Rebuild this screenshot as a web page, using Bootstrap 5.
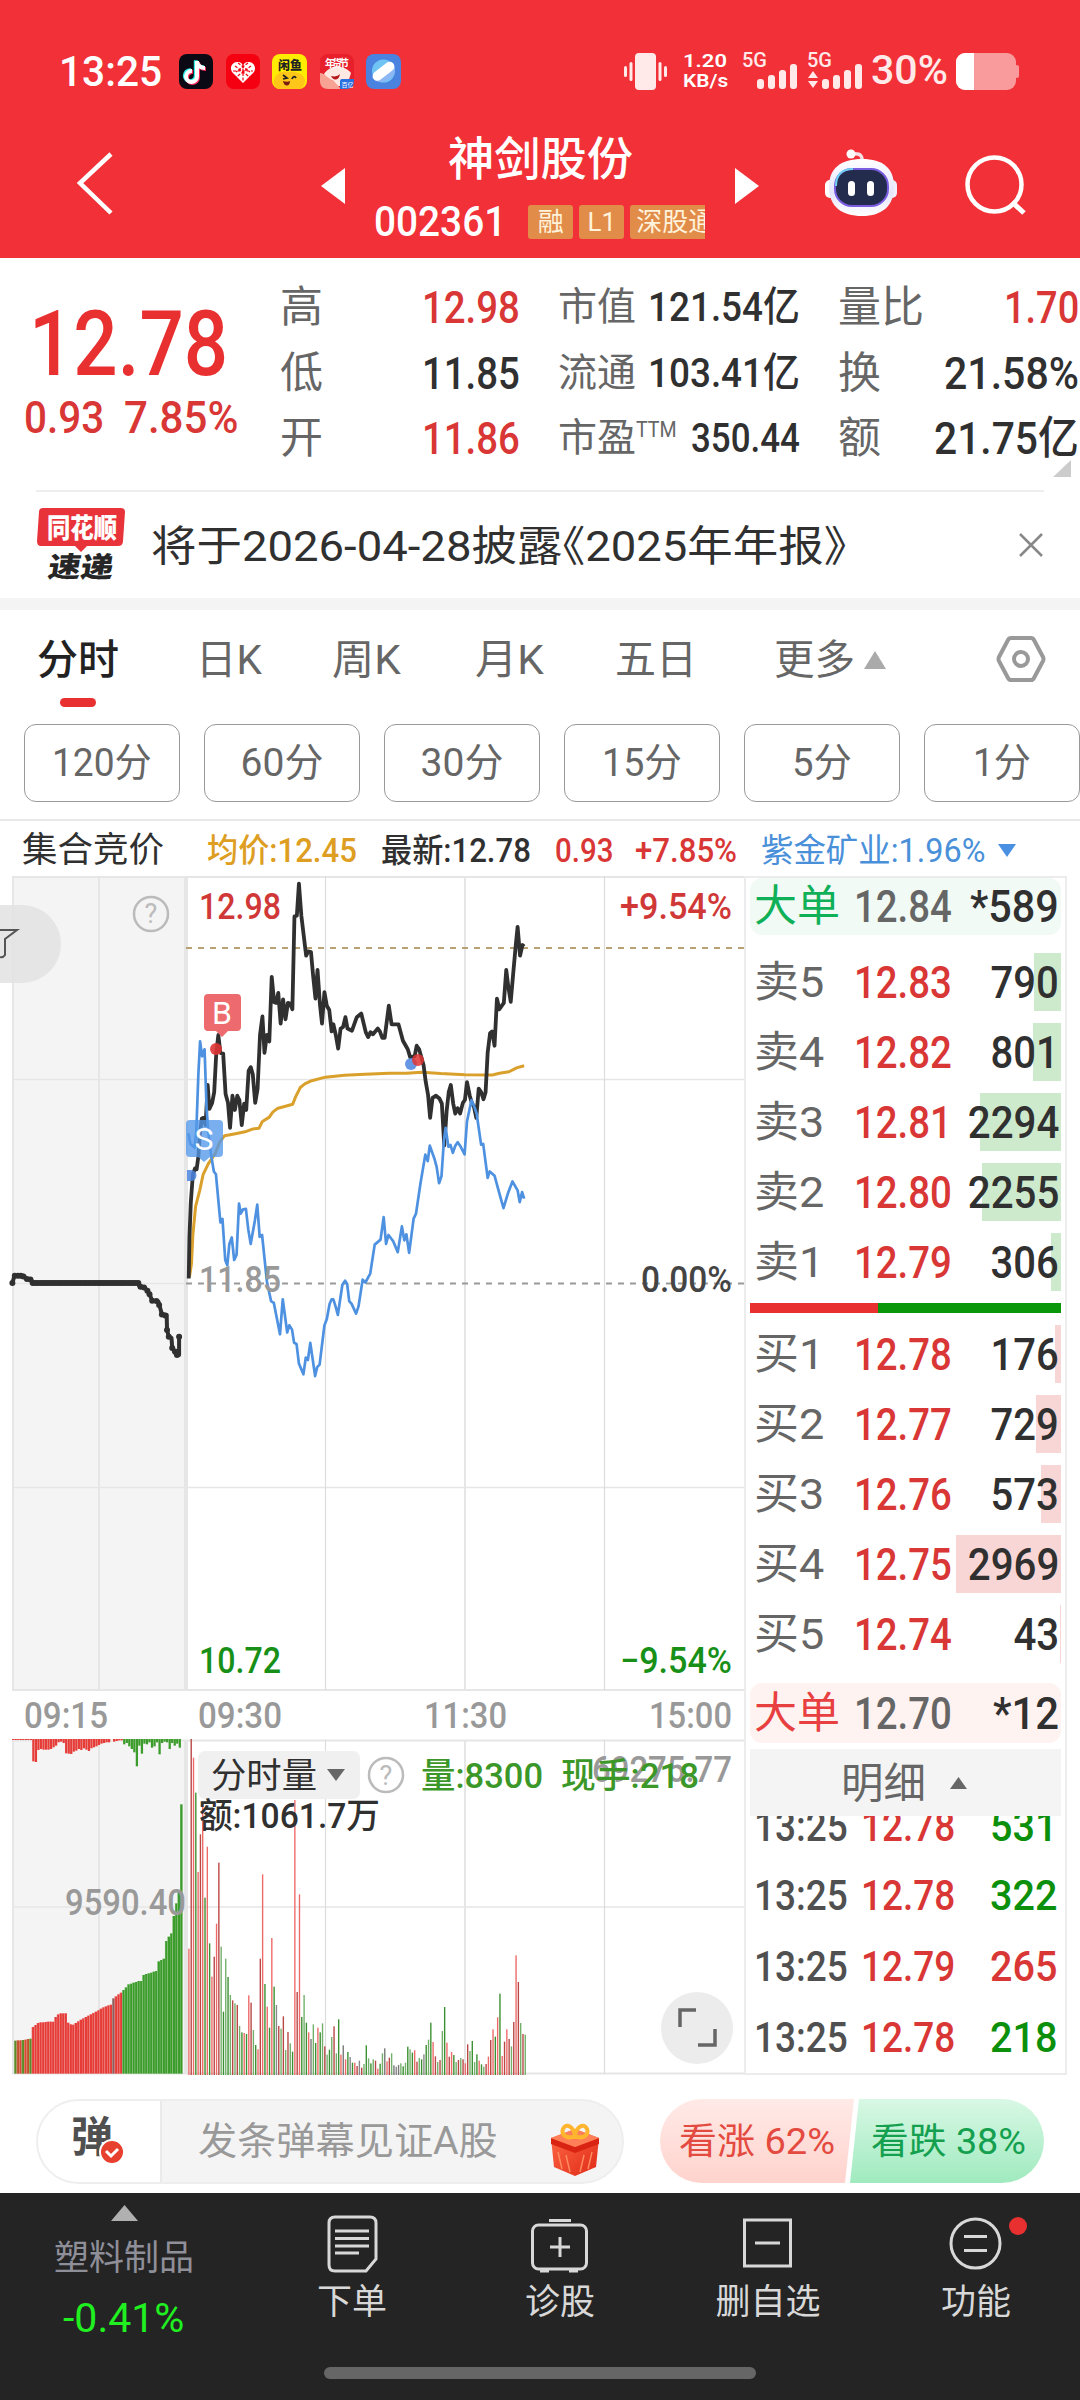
<!DOCTYPE html>
<html lang="zh-CN">
<head>
<meta charset="utf-8">
<meta name="viewport" content="width=device-width, initial-scale=1">
<title>神剑股份 002361</title>
<link href="https://cdn.jsdelivr.net/npm/bootstrap@5.3.0/dist/css/bootstrap.min.css" rel="stylesheet">
<style>
:root{--up:#d93636;--down:#0c900c;--ink:#303030;--dim:#666}
html,body{margin:0;overflow:hidden}
body{width:1080px;height:2400px;font-family:Roboto,"Noto Sans CJK SC",sans-serif;line-height:1;color:var(--ink);background:#fff}
svg{display:block;flex:none;overflow:visible}
svg text{font-family:Roboto,"Noto Sans CJK SC",sans-serif}
.fit{display:inline-block;white-space:nowrap;transform-origin:0 50%;flex:none;justify-self:start}
.halt{font-feature-settings:"halt"}
.m5{font-weight:500}
.c-up{color:var(--up)}.c-down{color:var(--down)}.c-dim{color:var(--dim)}
.topbar{height:258px;background:#f13037;color:#fff}
.status{height:97px;padding:45px 61px 0 59px}
.apps{gap:12.5px;margin-left:17px}
.net{font-size:19px;font-weight:600;line-height:20px}
.titlebar{height:161px}
.ttl{width:389px;padding:36px 0 0 28px}
.ttl-name{font-size:46px;line-height:52px;margin-left:-28px}
.codeline{height:36px;margin-top:19px;gap:6px;width:331px;overflow:hidden}
.code{font-size:42px;margin-right:14px}
.tagx{background:#e28c4a;color:#fff3dc;font-size:26px;height:34px;line-height:34px;border-radius:3px;text-align:center;flex:none}
.quote{height:232px;padding-top:17px}
.pricebox{width:262px;padding-top:23px}
.px{font-size:91px;line-height:92px;color:#e93030;font-weight:500;margin-left:-4px}
.chg{font-size:45px;line-height:45px;margin-top:5px;gap:20px}
.stat{width:240px;margin-left:18px}
.stat+.stat{margin-left:38px;width:242px}
.srow{height:65.5px}
.k43{font-size:43px}.k38{font-size:39px}
.v45{font-size:45px}.v41{font-size:41px}
.news{height:108px;margin:0 36px;border-top:2px solid #eee}
.band{height:12px;background:#f4f4f4}
.tabsx{height:114px;font-size:41px}
.tab-grid{display:grid;grid-template-columns:159px 136px 143px 140px 159px 89px 133px 84px;padding-left:37px;height:100px}
.tab-line{width:36px;height:9px;border-radius:5px;background:#e93030;margin:-1px 0 0 60px}
.periods{gap:24px;padding-left:24px;overflow:hidden}
.pbtn{width:156px;height:78px;border:1.5px solid #999;border-radius:12px;background:#fff;color:var(--dim);font-size:39px;line-height:1;flex:none}
.info{border-top:2px solid #e8e8e8;margin-top:17px;height:57px;display:grid;grid-template-columns:185px 174px 174px 80px 126px 237px 40px;padding:4px 0 0 22px;font-size:33px}
.book{width:323px;height:1199px;border:2px solid #ececec;padding:0 4px;overflow:hidden}
.brow{height:58px;margin-bottom:12px;display:grid;grid-template-columns:100px 98px 1fr;padding:0 2px 0 4px;background-repeat:no-repeat;background-position:right center}
.brow .q,.trow .q{justify-self:end;transform-origin:100% 50%}
.big{border-radius:12px;height:57px}
.det{height:67px;background:#f4f4f4;font-size:42px}
.trow{display:grid;grid-template-columns:107px 100px 1fr;height:71px;padding:0 4px 0 4px;font-size:42.5px;font-weight:500}
.foot{height:94px;margin-top:24px;padding:0 36px 10px}
.danmu{width:588px;height:85px;border:2px solid #eee;border-radius:43px;background:#f4f4f4;overflow:hidden}
.dm-l{width:124px;height:100%;background:#fff;border-right:2px solid #eaeaea}
.dm-t{font-size:38px;color:#999;margin-left:36px}
.nav-dark{height:207px;background:#242424;color:#d8d8d8}
.nitem{width:208px;font-size:35px}
.nitem span{margin-top:2px}
.home{width:432px;height:12px;border-radius:6px;background:#666;margin:0 auto}
</style>
<script src="https://cdn.jsdelivr.net/npm/bootstrap@5.3.0/dist/js/bootstrap.bundle.min.js"></script>
</head>
<body>
<header class="topbar">
  <div class="status d-flex align-items-center">
    <span class="fit m5" data-w="103" style="font-size:43px">13:25</span>
    <div class="apps d-flex">
      <svg width="34" height="35" viewBox="0 0 34 35"><rect width="34" height="35" rx="8" fill="#0b0a14"/><g fill="none" stroke-width="4"><path d="M18 7v15a5.500 5.500 0 1 1-5-5M18 8c1 4 4 6 8 6" stroke="#2ff0ea" transform="translate(-1.200 -.8)"/><path d="M18 7v15a5.500 5.500 0 1 1-5-5M18 8c1 4 4 6 8 6" stroke="#fe2858" transform="translate(1 1)"/><path d="M18 7v15a5.500 5.500 0 1 1-5-5M18 8c1 4 4 6 8 6" stroke="#fff"/></g></svg>
      <svg width="34" height="35" viewBox="0 0 34 35"><rect width="34" height="35" rx="8" fill="#f40010"/><path d="M17 29 6 18c-3-5 1-11 6-10 3 0 4 2 5 3 1-1 2-3 5-3 5-1 9 5 6 10z" fill="#fff"/><path d="M9 12l16 12M25 12 9 24M17 10v18M7 17h20M12 9l12 9M22 9l-12 9" stroke="#f40010" stroke-width="1.200" stroke-dasharray="3 1.500"/></svg>
      <svg width="35" height="35" viewBox="0 0 35 35"><rect width="35" height="35" rx="8" fill="#ffec00"/><path d="M2 29C1 21 10 16 16 18c7-1 15 1 17 8 0 6-3 9-8 9H9c-4 0-7-2-7-6z" fill="#ffc61a"/><text x="6" y="15.500" font-size="12" font-weight="900" fill="#222" textLength="24">闲鱼</text><path d="M11 21l4 3-4 1M20 25c1-3 3-3 4-1" stroke="#222" stroke-width="1.800" fill="none"/><path d="M11 27c3 1 5 1 7 0 0 6-6 6-7 0z" fill="#7a1c10"/></svg>
      <svg width="34" height="35" viewBox="0 0 34 35"><rect width="34" height="35" rx="8" fill="#e8202c"/><path d="M4 20c3-4 8-8 14-7 5 0 10 2 13 6l-4 13H10z" fill="#ffe9e2"/><path d="M0 19c5 0 8 6 13 7l8 9H8c-5 0-8-3-8-8z" fill="#f8a294"/><text x="5" y="12.500" font-size="10" font-weight="700" fill="#fff" textLength="24">年货节</text><path d="M11 22c4 1 7 0 9-2-1 7-7 7-9 2z" fill="#b3171d"/><path d="M20 27q0-2 2-2h12v2q0 8-8 8h-6z" fill="#2a6fe0"/><text x="21.500" y="33" font-size="6" fill="#fff">百亿</text></svg>
      <svg width="35" height="35" viewBox="0 0 35 35"><rect width="35" height="35" rx="8" fill="#4a82e0"/><circle cx="17.500" cy="17" r="11.500" fill="#6fc4f4"/><path d="M6 23c3 7 15 6 20 0 4-5 3-9 1-13z" fill="#8db6f5"/><rect x="5" y="12.500" width="25" height="9.500" rx="4.700" fill="#fff" transform="rotate(-38 17.500 17.200)"/></svg>
    </div>
    <svg class="ms-auto" width="43" height="37" viewBox="0 0 43 37" fill="#ffe9e9"><rect x="11" y="0" width="21" height="37" rx="4"/><rect x="5.500" y="9" width="3" height="19" rx="1.500"/><rect x="34.500" y="9" width="3" height="19" rx="1.500"/><rect x="0" y="13" width="3" height="11" rx="1.500"/><rect x="40" y="13" width="3" height="11" rx="1.500"/></svg>
    <div class="net text-center" style="width:46px;margin-left:15px"><span class="fit" data-w="44">1.20</span><br><span class="fit" data-w="45">KB/s</span></div>
    <svg width="122" height="38" viewBox="741 53 122 38" style="margin-left:13px" fill="#ffe9e9"><text x="742" y="68" font-size="19.500" font-weight="500" textLength="25" lengthAdjust="spacingAndGlyphs">5G</text><text x="807" y="68" font-size="19.500" font-weight="500" textLength="25" lengthAdjust="spacingAndGlyphs">5G</text><rect x="757" y="80" width="7" height="10" rx="3"/><rect x="768" y="76" width="7" height="14" rx="3"/><rect x="779" y="71" width="7" height="19" rx="3"/><rect x="790" y="65" width="7" height="25" rx="3"/><rect x="822" y="80" width="7" height="10" rx="3"/><rect x="833" y="76" width="7" height="14" rx="3"/><rect x="844" y="71" width="7" height="19" rx="3"/><rect x="855" y="65" width="7" height="25" rx="3"/><path d="M808 79l5-7 5 7zM808 82l5 7 5-7z"/></svg>
    <span class="fit m5" data-w="77" style="font-size:40px;margin-left:8px;color:#ffe9e9">30%</span>
    <svg width="63" height="37" viewBox="0 0 63 37" style="margin:0 0 0 8px"><rect width="60" height="37" rx="9" fill="#f99a9d"/><path d="M9 0h9v37H9a9 9 0 0 1-9-9V9a9 9 0 0 1 9-9z" fill="#fff"/><rect x="59" y="12" width="4" height="13" rx="2" fill="#f99a9d"/></svg>
  </div>
  <div class="titlebar d-flex align-items-start">
    <svg width="320" height="160" viewBox="0 97 320 160"><path d="M111 154 80 183l31 30" fill="none" stroke="#fff" stroke-width="4.500"/></svg>
    <svg width="26" height="160" viewBox="320 97 26 160"><path d="M345 168v36l-24-18z" fill="#fff"/></svg>
    <div class="ttl d-flex flex-column align-items-start">
      <div class="ttl-name align-self-center"><span class="fit m5" data-w="185">神剑股份</span></div>
      <div class="codeline d-flex align-items-center"><span class="fit code m5" data-w="132">002361</span><span class="tagx" style="width:45px;margin-left:2px">融</span><span class="tagx" style="width:45px">L1</span><span class="tagx" style="width:90px">深股通</span></div>
    </div>
    <svg width="345" height="160" viewBox="735 97 345 160"><defs><linearGradient id="rb" x1="0" y1="0" x2="0" y2="1"><stop offset="0" stop-color="#fff"/><stop offset=".6" stop-color="#e6e4fb"/><stop offset="1" stop-color="#fff"/></linearGradient></defs><path d="M735 168v36l24-18z" fill="#fff"/><path d="M852 154c9-1 11 2 10 10" stroke="#f7dfe6" stroke-width="3.500" fill="none"/><circle cx="851" cy="154" r="4.500" fill="#fff"/><rect x="825" y="180" width="10" height="18" rx="5" fill="#fff"/><rect x="887" y="180" width="10" height="18" rx="5" fill="#f1efff"/><path d="M829 187c0-19 12-28 33-28s32 9 32 28-12 29-32 29-33-9-33-29z" fill="url(#rb)"/><rect x="835" y="169" width="53" height="37" rx="17" fill="#232c4c" stroke="#7a5ce0" stroke-width="2"/><path d="M836 186c0-12 7-17 17-17" stroke="#6fd0f0" stroke-width="2" fill="none"/><rect x="848" y="181" width="7" height="15" rx="3.500" fill="#fff"/><rect x="867" y="181" width="7" height="15" rx="3.500" fill="#fff"/><circle cx="994.500" cy="184.500" r="27" fill="none" stroke="#fff" stroke-width="4.500"/><path d="M1012 202l12 11" stroke="#fff" stroke-width="5"/></svg>
  </div>
</header>

<section class="quote d-flex">
  <div class="pricebox text-center">
    <div class="px"><span class="fit" data-w="199">12.78</span></div>
    <div class="chg c-up m5 d-flex justify-content-center"><span class="fit" data-w="80">0.93</span><span class="fit" data-w="114">7.85%</span></div>
  </div>
  <div class="stat m5">
    <div class="srow d-flex align-items-center justify-content-between"><span class="k43 c-dim fw-normal">高</span><span class="fit v45 c-up" data-w="98">12.98</span></div>
    <div class="srow d-flex align-items-center justify-content-between"><span class="k43 c-dim fw-normal">低</span><span class="fit v45" data-w="98">11.85</span></div>
    <div class="srow d-flex align-items-center justify-content-between"><span class="k43 c-dim fw-normal">开</span><span class="fit v45 c-up" data-w="98">11.86</span></div>
  </div>
  <div class="stat m5">
    <div class="srow d-flex align-items-center justify-content-between"><span class="k38 c-dim fw-normal">市值</span><span class="fit v41" data-w="152">121.54亿</span></div>
    <div class="srow d-flex align-items-center justify-content-between"><span class="k38 c-dim fw-normal">流通</span><span class="fit v41" data-w="152">103.41亿</span></div>
    <div class="srow d-flex align-items-center justify-content-between"><span class="k38 c-dim fw-normal d-flex">市盈<span class="fit" data-w="41" style="font-size:22px">TTM</span></span><span class="fit v41" data-w="109">350.44</span></div>
  </div>
  <div class="stat m5" style="width:241px">
    <div class="srow d-flex align-items-center justify-content-between"><span class="k43 c-dim fw-normal">量比</span><span class="fit v45 c-up" data-w="75">1.70</span></div>
    <div class="srow d-flex align-items-center justify-content-between"><span class="k43 c-dim fw-normal">换</span><span class="fit v45" data-w="135">21.58%</span></div>
    <div class="srow d-flex align-items-center justify-content-between position-relative"><span class="k43 c-dim fw-normal">额</span><span class="fit v45" data-w="145">21.75亿</span><svg class="position-absolute" style="right:8px;bottom:-5px" width="18" height="17"><path d="M18 0v17H0z" fill="#ccc"/></svg></div>
  </div>
</section>

<section class="news d-flex align-items-center">
  <svg width="93" height="76" viewBox="36 506 93 76"><path d="M43 507h78q4 0 4 4l-2 29q0 5-5 5H87l-6 6-6-6H41q-4 0-4-5l2-29q0-4 4-4z" fill="#e8333a"/><text x="47" y="537" font-size="27" font-weight="900" fill="#fff" textLength="70" lengthAdjust="spacingAndGlyphs">同花顺</text><text transform="translate(47 576) skewX(-9)" font-size="28" font-weight="900" fill="#262626" textLength="65" lengthAdjust="spacingAndGlyphs">速递</text></svg>
  <span class="fit" data-w="696" style="font-size:42px;margin-left:22px;padding-top:3px">将于2026-04-28披露<span class="halt">《</span>2025年年报<span class="halt">》</span></span>
  <svg class="ms-auto" width="26" height="26" viewBox="0 0 26 26"><path d="M2 2l22 22M24 2 2 24" stroke="#888" stroke-width="2.500"/></svg>
</section>
<div class="band"></div>

<nav class="tabsx c-dim">
  <div class="tab-grid align-items-center">
    <span class="m5" style="color:#222">分时</span><span class="fit" data-w="66">日K</span><span class="fit" data-w="69">周K</span><span class="fit" data-w="69">月K</span><span>五日</span><span class="fit" data-w="81">更多</span>
    <svg width="24" height="20"><path d="M12 1l11 18H1z" fill="#aaa"/></svg>
    <svg width="50" height="48" viewBox="0 1 50 48" fill="none" stroke="#999" stroke-width="4"><path d="M15 3h20q2 0 3 2l9 17q1 2 0 4l-9 17q-1 2-3 2H15q-2 0-3-2L3 26q-1-2 0-4l9-17q1-2 3-2z"/><circle cx="25" cy="24" r="7"/></svg>
  </div>
  <div class="overflow-visible" style="height:0"></div>
  <div style="margin-top:-12px"><div class="tab-line"></div></div>
</nav>
<div class="periods d-flex">
  <button class="pbtn btn p-0"><span class="fit" data-w="100">120分</span></button><button class="pbtn btn p-0"><span class="fit" data-w="83">60分</span></button><button class="pbtn btn p-0"><span class="fit" data-w="83">30分</span></button><button class="pbtn btn p-0"><span class="fit" data-w="80">15分</span></button><button class="pbtn btn p-0"><span class="fit" data-w="60">5分</span></button><button class="pbtn btn p-0"><span class="fit" data-w="58">1分</span></button>
</div>

<div class="info align-items-center">
  <span class="fit" data-w="142" style="font-size:35px">集合竞价</span>
  <span class="fit m5" data-w="150" style="color:#dd9e22">均价:12.45</span>
  <span class="fit m5" data-w="150">最新:12.78</span>
  <span class="fit m5 c-up" data-w="58">0.93</span>
  <span class="fit m5 c-up" data-w="102">+7.85%</span>
  <span class="fit" data-w="225" style="color:#4a90d9">紫金矿业:1.96%</span>
  <svg width="18" height="13"><path d="M0 0h18l-9 13z" fill="#4a90e2"/></svg>
</div>

<main class="d-flex" style="height:1199px">
  <svg id="chart" width="744" height="1199" viewBox="0 876 744 1199">
    <rect x="12" y="876" width="174" height="814" fill="#f4f4f4"/><rect x="12" y="1740" width="174" height="334" fill="#f4f4f4"/>
    <g stroke="#e6e6e6" stroke-width="2" fill="none">
      <path d="M12 877H744M12 1690H744M12 1740.500H744M12 2073.500H744M13 876V1690M13 1740V2074M99 876V1690M99 1740V2074M465 876V1690M465 1740V2074"/>
      <path d="M12 1079.500H744M12 1487.500H744M12 1907H744M12 1283.500H186" stroke-width="1.500"/>
      <path d="M325.500 876V1690M325.500 1740V2074M604.500 876V1690M604.500 1740V2074" stroke="#dcdcdc" stroke-width="1.200"/>
      <path d="M186 876V1690M186 1740V2074" stroke-width="4"/>
    </g>
    <path d="M186 948H744" stroke="#b8a273" stroke-width="2" stroke-dasharray="6 6"/>
    <path d="M186 1283.500H744" stroke="#999" stroke-width="2" stroke-dasharray="6 6"/>
    <g id="volume" transform="translate(0,1720) scale(.34439,.33333)"></g>
    <g transform="translate(0,860) scale(.34439,.35714)" fill="none" stroke-linejoin="round">
      <polyline vector-effect="non-scaling-stroke" stroke="#303030" stroke-width="4" points="36,1184 42,1164 68,1164 78,1173 90,1173 95,1184 400,1184 405,1194 420,1196 434,1215 442,1234 460,1236 470,1272 484,1274 485,1315 490,1335 498,1338 500,1366 512,1386 520,1386 520,1335"/>
      <polyline vector-effect="non-scaling-stroke" stroke="#daa02c" stroke-width="3" points="550,1168 556,1130 560,1050 568,970 580,925 590,880 605,850 625,822 638,790 652,772 680,767 715,760 735,753 752,751 762,732 782,720 792,706 805,696 850,684 858,664 872,637 885,627 905,618 945,608 1000,603 1060,600 1130,597 1180,597 1225,594 1280,598 1350,601 1430,602 1450,597 1478,593 1500,582 1522,576"/>
      <polyline vector-effect="non-scaling-stroke" stroke="#303030" stroke-width="3.800" points="548,1172 550,1060 554,960 560,880 566,864 571,866 576,830 580,770 586,724 591,722 597,742 603,630 608,697 616,680 622,650 628,540 634,490 640,540 648,542 655,655 662,680 668,750 675,660 682,700 689,660 695,672 702,742 709,682 715,700 722,590 728,580 734,600 741,680 748,640 755,490 762,438 768,540 775,490 782,508 789,327 796,398 802,400 808,372 815,458 822,390 829,446 836,400 842,402 849,418 855,158 862,156 868,66 875,156 889,268 895,256 903,258 909,322 916,388 922,308 929,404 935,458 942,370 949,408 956,420 963,480 968,460 975,490 982,528 989,472 996,468 1003,440 1009,472 1022,478 1036,440 1049,430 1056,458 1062,482 1069,496 1076,482 1083,488 1097,472 1103,480 1110,498 1117,498 1129,408 1137,460 1157,460 1170,506 1184,530 1191,552 1204,550 1210,520 1217,530 1230,575 1236,620 1243,658 1249,722 1256,666 1266,660 1276,668 1283,682 1290,800 1297,702 1303,650 1309,630 1316,682 1322,710 1329,695 1336,710 1344,680 1350,672 1356,622 1364,660 1370,680 1376,690 1383,722 1390,640 1397,650 1404,670 1410,650 1416,540 1423,485 1429,480 1436,520 1443,388 1450,418 1463,400 1470,308 1476,355 1483,397 1490,320 1497,245 1503,187 1510,268 1517,238 1522,242"/>
      <polyline vector-effect="non-scaling-stroke" stroke="#4d91e0" stroke-width="2.700" points="547,765 553,795 565,805 570,760 576,600 581,508 587,550 594,530 600,700 606,770 612,820 621,872 627,880 640,1015 646,1005 654,1120 660,1135 666,1075 673,1057 680,1120 687,1105 694,962 699,990 706,978 714,977 721,1035 728,1075 740,1010 747,965 754,1055 761,1050 775,1180 787,1235 795,1240 813,1328 821,1230 834,1323 840,1303 848,1315 854,1352 861,1355 868,1410 881,1440 888,1393 894,1400 901,1352 915,1445 921,1420 928,1413 942,1303 949,1285 957,1243 963,1230 968,1230 975,1252 981,1274 994,1190 1002,1178 1008,1187 1014,1235 1021,1243 1034,1270 1041,1250 1053,1175 1061,1183 1075,1158 1088,1077 1105,1063 1114,1000 1121,1075 1128,1050 1142,1068 1155,1098 1167,1026 1174,1065 1180,1048 1188,1100 1201,1004 1208,990 1221,905 1235,825 1242,843 1248,800 1262,838 1268,860 1275,905 1282,885 1289,785 1294,750 1302,803 1308,798 1315,820 1322,800 1329,790 1336,800 1349,824 1356,732 1369,672 1377,690 1384,710 1397,797 1403,795 1416,890 1422,872 1436,884 1449,930 1462,975 1476,930 1488,900 1503,925 1509,958 1516,930 1522,948"/>
    </g>
    <g fill="#303030" id="dots"></g>
    <circle cx="411" cy="1064" r="6" fill="#4a85e0" opacity=".85"/><circle cx="418" cy="1060" r="6" fill="#e03434" opacity=".85"/><circle cx="216" cy="1049" r="6" fill="#e03434" opacity=".9"/><path d="M187 1170h4a5.500 5.500 0 0 1 0 11h-4z" fill="#4a85e0" opacity=".85"/>
    <path d="M208 994h29q4 0 4 4v29q0 4-4 4h-9l-6 6-6-6h-8q-4 0-4-4v-29q0-4 4-4z" fill="#ed6b6e"/>
    <path d="M190 1120h29q4 0 4 4v29q0 4-4 4h-9l-6 5-6-5h-8q-4 0-4-4v-29q0-4 4-4z" fill="#5599ea" opacity=".78"/>
    <g font-size="32" fill="#fff" text-anchor="middle"><text x="222" y="1024">B</text><text x="204" y="1150">S</text></g>
    <g font-weight="500" font-size="36">
      <g fill="#d03838"><text x="199" y="919" textLength="82" lengthAdjust="spacingAndGlyphs">12.98</text><text x="620" y="919" textLength="112" lengthAdjust="spacingAndGlyphs">+9.54%</text></g>
      <g fill="#189018"><text x="199" y="1673" textLength="82" lengthAdjust="spacingAndGlyphs">10.72</text><text x="620" y="1673" textLength="112" lengthAdjust="spacingAndGlyphs">−9.54%</text></g>
      <text x="199" y="1292" fill="#999" textLength="82" lengthAdjust="spacingAndGlyphs">11.85</text><text x="641" y="1292" fill="#444" textLength="91" lengthAdjust="spacingAndGlyphs">0.00%</text>
      <g fill="#999"><text x="24" y="1728" textLength="84" lengthAdjust="spacingAndGlyphs">09:15</text><text x="198" y="1728" textLength="84" lengthAdjust="spacingAndGlyphs">09:30</text><text x="424" y="1728" textLength="83" lengthAdjust="spacingAndGlyphs">11:30</text><text x="649" y="1728" textLength="83" lengthAdjust="spacingAndGlyphs">15:00</text>
      <text x="65" y="1915" textLength="121" lengthAdjust="spacingAndGlyphs">9590.40</text><text x="592" y="1782" textLength="140" lengthAdjust="spacingAndGlyphs">69275.77</text></g>
      <rect x="198" y="1751" width="162" height="48" rx="7" fill="#f0f0f0"/>
      <text x="211" y="1788" font-weight="400" font-size="35" fill="#303030" textLength="106" lengthAdjust="spacingAndGlyphs">分时量</text>
      <path d="M327 1769h18l-9 12z" fill="#666"/>
      <g font-size="35" fill="#3a9728"><text x="421" y="1788" textLength="122" lengthAdjust="spacingAndGlyphs">量:8300</text><text x="561" y="1788" textLength="138" lengthAdjust="spacingAndGlyphs">现手:218</text></g>
      <text x="199" y="1828" font-size="35" fill="#303030" textLength="181" lengthAdjust="spacingAndGlyphs">额:1061.7万</text>
    </g>
    <g fill="none" stroke="#bbb" stroke-width="2.500"><circle cx="151" cy="914" r="17"/><circle cx="386" cy="1775" r="17"/></g>
    <g font-size="27" fill="#bbb" text-anchor="middle"><text x="151" y="923">?</text><text x="386" y="1785">?</text></g>
    <path d="M0 905h22a39 39 0 0 1 0 78H0z" fill="#e2e2e2" opacity=".85"/>
    <path d="M0 930h17l-12 9v16q-2 3-5 2" fill="none" stroke="#555" stroke-width="2"/>
    <circle cx="697" cy="2028" r="36" fill="#ececec"/><path d="M680 2027v-17h16M715 2029v16h-17" fill="none" stroke="#666" stroke-width="3.500"/>
  </svg>

  <aside class="book" id="book"></aside>
</main>

<section class="foot d-flex align-items-center justify-content-between">
  <div class="danmu d-flex align-items-center">
    <div class="dm-l"><svg width="120" height="81" viewBox="38 2101 120 81"><text x="71" y="2152" font-size="42" font-weight="700" fill="#505050">弹</text><circle cx="112" cy="2152" r="12" fill="#e8402f" stroke="#fff" stroke-width="2"/><path d="M106 2151l5 5 7-7" fill="none" stroke="#fff" stroke-width="3"/></svg></div>
    <span class="fit dm-t" data-w="300">发条弹幕见证A股</span>
    <svg class="ms-auto" width="74" height="81" viewBox="549 2101 74 81"><defs><linearGradient id="gf" x1="0" y1="0" x2="1" y2="1"><stop offset="0" stop-color="#ff6a45"/><stop offset="1" stop-color="#e02a18"/></linearGradient></defs><path d="M552 2138l24-9 24 9-3 29-21 9-21-9z" fill="url(#gf)"/><path d="M552 2138l24 9v6l-24-9zM600 2138l-24 9v6l24-9z" fill="#d92413"/><path d="M552 2138l24-9 24 9-24 9z" fill="#ff8058"/><path d="M559 2152l4 17M567 2155l4 17M593 2152l-4 17M585 2155l-4 17" stroke="#ff8a60" stroke-width="1.500"/><path d="M576 2136c-9 4-14-2-12-7 3-7 11-2 12 7 1-9 9-14 12-7 2 5-3 11-12 7z" fill="none" stroke="#ffb52e" stroke-width="4"/></svg>
  </div>
  <svg width="384" height="84" viewBox="660 2099 384 84"><defs><linearGradient id="vr" x1="0" y1="0" x2="0" y2="1"><stop offset="0" stop-color="#ffeae7"/><stop offset="1" stop-color="#ffd3cd"/></linearGradient><linearGradient id="vg" x1="0" y1="0" x2="0" y2="1"><stop offset="0" stop-color="#d8f8e5"/><stop offset="1" stop-color="#a0eabf"/></linearGradient></defs><path d="M702 2099h152l-9 84H702a42 42 0 0 1 0-84z" fill="url(#vr)"/><path d="M859 2099h143a42 42 0 0 1 0 84H850z" fill="url(#vg)"/><g font-size="36"><text x="679" y="2154" fill="#e34a40" textLength="156" lengthAdjust="spacingAndGlyphs">看涨 62%</text><text x="871" y="2154" fill="#14a04f" textLength="155" lengthAdjust="spacingAndGlyphs">看跌 38%</text></g></svg>
</section>

<footer class="nav-dark">
  <div class="d-flex" style="height:174px">
    <div class="d-flex flex-column align-items-center" style="width:248px;padding-top:12px"><svg width="27" height="16"><path d="M13.500 0 27 16H0z" fill="#b0b0b0"/></svg><span style="font-size:35px;color:#8f8f99;margin-top:20px">塑料制品</span><span class="fit" data-w="121" style="font-size:40px;color:#20f020;margin-top:23px">-0.41%</span></div>
    <div class="nitem d-flex flex-column align-items-center"><svg width="60" height="90" viewBox="322 2193 60 90" fill="none" stroke="#d8d8d8" stroke-width="3"><path d="M335 2217h35q6 0 6 6v36l-10 12h-31q-6 0-6-6v-42q0-6 6-6z"/><path d="M335 2231h34M335 2238.500h34M335 2246h34M335 2253h24"/></svg><span>下单</span></div>
    <div class="nitem d-flex flex-column align-items-center"><svg width="60" height="90" viewBox="530 2193 60 90" fill="none" stroke="#d8d8d8" stroke-width="3"><rect x="532.500" y="2225" width="54" height="44" rx="6"/><path d="M549 2220.500h22M540 2271h9M569 2271h9M550 2247h20M560 2237v20"/></svg><span>诊股</span></div>
    <div class="nitem d-flex flex-column align-items-center"><svg width="60" height="90" viewBox="738 2193 60 90" fill="none" stroke="#d8d8d8" stroke-width="3"><rect x="744.500" y="2220" width="46" height="46"/><path d="M755 2243h25"/></svg><span>删自选</span></div>
    <div class="nitem d-flex flex-column align-items-center"><svg width="92" height="90" viewBox="930 2193 92 90" fill="none" stroke="#d8d8d8" stroke-width="3"><circle cx="975.500" cy="2243.500" r="24.500"/><path d="M964 2236.500h23M964 2250.500h23"/><circle cx="1018" cy="2226" r="9" fill="#e93030" stroke="none"/></svg><span>功能</span></div>
  </div>
  <div class="home"></div>
</footer>

<script>
// Order book rows: label, price, size, depth-bar width
const sells=[["卖5","12.83",790,27],["卖4","12.82",801,28],["卖3","12.81",2294,81],["卖2","12.80",2255,79],["卖1","12.79",306,10]];
const buys=[["买1","12.78",176,6],["买2","12.77",729,25],["买3","12.76",573,20],["买4","12.75",2969,105],["买5","12.74",43,1]];
const row=(r,c)=>`<div class="brow align-items-center" style="background-image:linear-gradient(${c},${c});background-size:${r[3]}px 100%"><span class="fit c-dim" data-w="70" style="font-size:43px">${r[0]}</span><span class="fit c-up m5" data-w="98" style="font-size:45px">${r[1]}</span><span class="q fit m5" data-w="${String(r[2]).length*22.8}" style="font-size:45px">${r[2]}</span></div>`;
const big=(p,q,w,bg,c,mb,h)=>`<div class="brow big align-items-center" style="background:${bg};margin-bottom:${mb}px;height:${h}px"><span class="fit" data-w="86" style="font-size:43px;color:${c}">大单</span><span class="fit m5 c-dim" data-w="98" style="font-size:45px">${p}</span><span class="q fit m5" data-w="${w}" style="font-size:45px">${q}</span></div>`;
const ticks=[["12.78",531,"c-down"],["12.78",322,"c-down"],["12.79",265,"c-up"],["12.78",218,"c-down"]];
document.getElementById("book").innerHTML=
 big("12.84","*589",89,"#f1faf5","#10b058",18,57)+sells.map(r=>row(r,"#cdeacd")).join("")+
 `<div class="d-flex" style="height:10px;margin:2px 0 12px"><div style="width:128px;background:#e93030"></div><div class="flex-fill" style="background:#0a980a"></div></div>`+
 buys.map(r=>row(r,"#f9d6d6")).join("")+`<div style="height:8px"></div>`+
 big("12.70","*12",66,"#fff3f2","#e84040",6,60)+
 `<div class="det d-flex align-items-center c-dim"><span class="fit" data-w="85" style="margin-left:91px;padding-top:3px">明细</span><svg width="17" height="12" style="margin-left:24px"><path d="M8.500 0 17 12H0z" fill="#666"/></svg></div><div style="height:254px;overflow:hidden"><div style="margin-top:-22px">`+
 ticks.map((t,i)=>`<div class="trow align-items-center" style="height:${i?71:67}px"><span class="fit" data-w="94" style="color:#505050">13:25</span><span class="fit c-up" data-w="94">${t[0]}</span><span class="q fit ${t[2]}" data-w="67">${t[1]}</span></div>`).join("")+`</div></div>`;

// Regular-session volume bars: top of each bar and its colour, one per minute
const tops=[686,57,113,218,456,343,250,533,380,670,770,710,611,428,680,875,716,771,825,841,850,855,918,937,939,942,826,848,930,975,988,716,463,792,860,923,654,800,855,918,926,889,990,936,970,995,240,816,523,891,825,908,937,957,913,969,923,937,910,979,1004,989,951,919,1000,898,1004,976,1018,996,1011,1028,1028,1038,1022,1043,1032,976,1015,1030,1018,1022,1046,1031,1000,985,1024,1013,1000,1036,1040,1035,1030,1039,1028,980,988,998,991,1025,1014,1018,1003,975,959,908,966,1009,1026,1020,933,861,968,1010,996,1005,1026,1020,1014,1018,1030,973,993,963,1026,1003,1022,1033,1040,1032,1010,960,928,950,892,821,1008,965,928,957,979,906,706,786,909,942,944];
const cols="rrrgrrrgrgrrrrggggg"+"rgrggrgrrggr"+"rrgrgrgkrgrgrgg"+"rrrgggrkggrggrgggrgg"+"rkrgkgrrkrgggggrrggkrrgkkkggggggrrggkggg"+"rrgrggrrrggrgrrrgggg"+"rggrrrrgrgrrrrgrrrgrg";
const pal={r:["#ee6a68","#b84644"],g:["#72b06a","#3a9030"],k:["#888","#777"]};
let out="";
tops.forEach((t,i)=>{out+=`<rect x="${(546.5+6.69*i).toFixed(1)}" y="${t}" width="4" height="${1065-t}" fill="${pal[cols[i]||"g"][i%2]}"/>`});
// Call-auction bars rising from the base
const pts=[[41,962],[62,960],[90,955],[93,920],[108,908],[140,905],[152,898],[168,880],[188,880],[190,905],[206,916],[232,898],[270,878],[300,860],[320,853],[324,836],[350,816],[370,793],[400,783],[412,765],[450,753],[455,725],[472,716],[476,668],[492,640],[500,588],[508,550],[515,515],[520,253]];
for(let x=41;x<525;x+=7.3){let y=962;for(let k=0;k<pts.length;k++){if(pts[k][0]<=x+1){y=pts[k][1];const n=pts[k+1];if(n&&n[0]-pts[k][0]>12)y+=(n[1]-y)*(x-pts[k][0])/(n[0]-pts[k][0])}}
 const n=Math.round((x-41)/7.3);let c=x<92?(n%2?"#c0532c":"#d94a36"):x<349?"#e63c38":"#3c9c2b";if(x<92&&n%3==0)c="#5a8c28";if(Math.abs(x-326)<4)c="#8c5a5a";
 out+=`<rect x="${x.toFixed(1)}" y="${y.toFixed(0)}" width="7.300" height="${(1061-y).toFixed(0)}" fill="${c}"/><rect x="${x.toFixed(1)}" y="${y.toFixed(0)}" width="1.500" height="${(1061-y).toFixed(0)}" fill="#fff" opacity=".28"/>`}
// Unmatched call-auction volume hanging from the top edge
const hang=[3,3,3,3,3,3,3,3,67,69,33,30,32,32,32,30,25,20,10,8,12,43,44,45,38,35,30,33,28,32,36,28,25,22,18,14,12,10,10,0,8,6,4,4,16,12,22,30,40,82,20,44,14,16,10,26,22,10,46,12,8,10,30,12,20,14,26];
hang.forEach((h,i)=>{out+=`<rect x="${(35+7.33*i).toFixed(1)}" y="57" width="6.600" height="${h}" fill="${i<44?"#e63c38":"#3c9c2b"}"/>`});
document.getElementById("volume").innerHTML=out;
// Dots along the auction line
let d="";const dot=(x,y)=>d+=`<circle cx="${(x*.34439).toFixed(1)}" cy="${(860+y*.35714).toFixed(1)}" r="3"/>`;
for(let x=95;x<=402;x+=7.3)dot(x,1184);
[[36,1184],[43,1164],[52,1164],[60,1164],[68,1166],[78,1173],[88,1175],[408,1195],[418,1197],[428,1206],[434,1216],[442,1234],[454,1235],[462,1246],[470,1273],[480,1275],[485,1316],[490,1335],[500,1366],[508,1376],[514,1386],[520,1335]].forEach(p=>dot(...p));
document.getElementById("dots").innerHTML=d;

document.querySelectorAll(".fit[data-w]").forEach(e=>{const w=+e.dataset.w,n=e.offsetWidth;e.style.transform=`scaleX(${w/n})`;if(!e.classList.contains("q"))e.style.marginRight=(parseFloat(getComputedStyle(e).marginRight)||0)+w-n+"px"});
</script>
</body>
</html>
